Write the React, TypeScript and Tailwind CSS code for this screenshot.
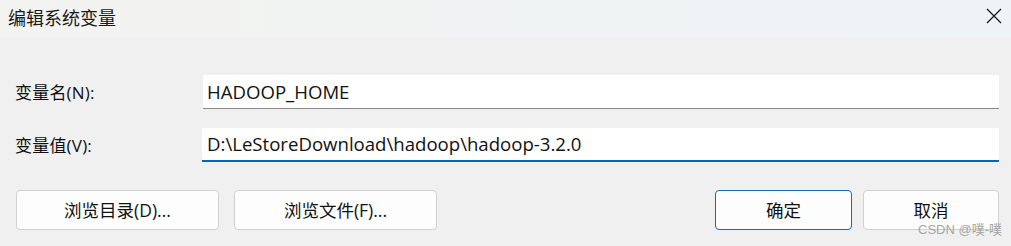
export default function App() {
  return (
    <div className="relative w-[1011px] h-[246px] bg-[#f0f0f0] flex flex-col overflow-hidden">
      <div className="h-[37px] flex items-center justify-between bg-gradient-to-r from-[#f3f3f0] to-[#eef3f7] pl-[8px] pr-[8px] font-['Microsoft_YaHei','Noto_Sans_CJK_SC',sans-serif]">
        <span className="text-[18px] leading-none text-[#1a1a1a] -mt-[4px]">编辑系统变量</span>
        <svg width="16" height="16" viewBox="0 0 16 16" className="mr-[1px] -mt-[5px]">
          <path d="M1 1 L15 15 M15 1 L1 15" stroke="#1a1a1a" strokeWidth="1.3" />
        </svg>
      </div>

      <div className="flex flex-col pl-[15px] pr-[12px] pt-[38px] gap-[19px] font-['Segoe_UI','Open_Sans','Noto_Sans_CJK_SC',sans-serif] text-[#111]">
        <div className="flex items-center h-[34px]">
          <label className="w-[188px] text-[17px] pt-[1px] tracking-[0.2px]">变量名(N):</label>
          <div className="flex-1 h-[34px] bg-white border-b border-[#878787] flex items-center pl-[4px] text-[18.6px]">
            HADOOP_HOME
          </div>
        </div>
        <div className="flex items-center h-[34px]">
          <label className="w-[187px] text-[17px] pt-[1px] tracking-[0.2px]">变量值(V):</label>
          <div className="flex-1 h-[34px] bg-white border-b-2 border-[#0067c0] flex items-center pl-[5px] text-[18.6px]">
            D:\LeStoreDownload\hadoop\hadoop-3.2.0
          </div>
        </div>
      </div>

      <div className="flex items-center pl-[16px] pr-[12px] mt-[28px] font-['Segoe_UI','Open_Sans','Noto_Sans_CJK_SC',sans-serif] text-[17.5px] text-[#111]">
        <button className="w-[203px] h-[40px] rounded-[4px] border border-[#d1d1d1] bg-[#fdfdfd] flex items-center justify-center">
          浏览目录(D)...
        </button>
        <button className="ml-[15px] w-[203px] h-[40px] rounded-[4px] border border-[#d1d1d1] bg-[#fdfdfd] flex items-center justify-center">
          浏览文件(F)...
        </button>
        <button className="ml-auto w-[137px] h-[40px] rounded-[4px] border border-[#0f6cbd] bg-[#fdfdfd] flex items-center justify-center">
          确定
        </button>
        <button className="ml-[11px] w-[136px] h-[40px] rounded-[4px] border border-[#d1d1d1] bg-[#fdfdfd] flex items-center justify-center">
          取消
        </button>
      </div>

      <span className="absolute left-[918px] top-[223px] text-[13px] leading-none text-[#9a9a9a]/90 font-['Liberation_Sans','Noto_Sans_CJK_SC',sans-serif]">
        CSDN @噗-噗
      </span>
    </div>
  );
}
